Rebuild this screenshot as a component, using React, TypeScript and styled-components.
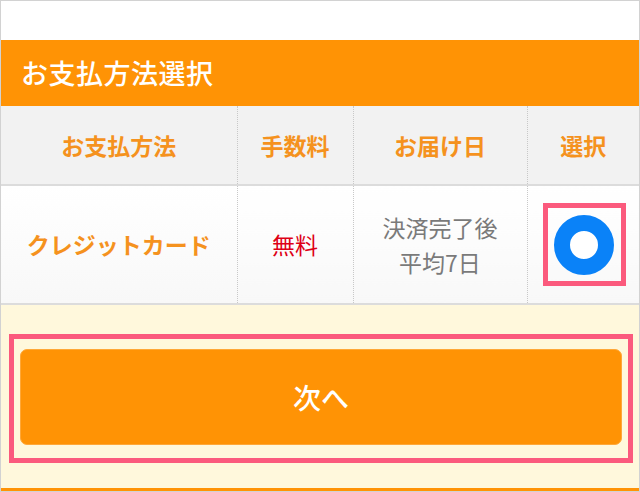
import styled, { createGlobalStyle } from "styled-components";

const GlobalStyle = createGlobalStyle`
	html, body {
		margin: 0;
		padding: 0;
		background: #ffffff;
	}
	body {
		font-family: "Noto Sans CJK JP", "Noto Sans", sans-serif;
	}
	* {
		box-sizing: border-box;
	}
`;

const Frame = styled.div`
	width: 640px;
	height: 492px;
	border: 1px solid #d2d2d2;
	background: #ffffff;
	display: flex;
	flex-direction: column;
	overflow: hidden;
`;

const TopSpace = styled.div`
	height: 39px;
	flex-shrink: 0;
`;

const Heading = styled.h2`
	margin: 0;
	height: 66px;
	flex-shrink: 0;
	background: #ff9305;
	color: #ffffff;
	font-size: 27px;
	font-weight: 500;
	letter-spacing: 0.5px;
	line-height: 66px;
	padding-left: 20px;
`;

const Table = styled.table`
	width: 100%;
	border-collapse: collapse;
	table-layout: fixed;
	flex-shrink: 0;
`;

const HeadCell = styled.th<{ $w: number }>`
	width: ${(p) => p.$w}px;
	height: 79px;
	padding: 0;
	background: #f2f2f2;
	border-bottom: 2px solid #dcdcdc;
	border-left: 1px dotted #c8c8c8;
	color: #f5921e;
	font-size: 23px;
	font-weight: 700;
	text-align: center;
	vertical-align: middle;

	&:first-child {
		border-left: none;
	}
`;

const BodyCell = styled.td<{ $tone?: "orange" | "red" | "gray" }>`
	height: 119px;
	padding: 0;
	background: linear-gradient(#ffffff, #f8f8f8);
	border-bottom: 2px solid #dcdcdc;
	border-left: 1px dotted #c8c8c8;
	font-size: 23px;
	line-height: 35px;
	text-align: center;
	vertical-align: middle;
	font-weight: ${(p) => (p.$tone === "orange" ? 700 : 400)};
	color: ${(p) =>
		p.$tone === "orange" ? "#f5921e" : p.$tone === "red" ? "#de0016" : "#7a7a7a"};

	&:first-child {
		border-left: none;
	}
`;

const Highlight = styled.div`
	display: inline-flex;
	align-items: center;
	justify-content: center;
	width: 83px;
	height: 83px;
	border: 5px solid #fb5a7d;
	vertical-align: middle;
	margin-left: 2px;
`;

const Radio = styled.span`
	display: block;
	width: 60px;
	height: 60px;
	border-radius: 50%;
	border: 16px solid #0a82f8;
	background: #ffffff;
`;

const Footer = styled.div`
	flex: 1;
	background: #fff8dc;
	border-bottom: 3px solid #ff9305;
	padding: 29px 6px 0 8px;
`;

const FocusBox = styled.div`
	border: 5px solid #fb5a7d;
	padding: 10px 6px 13px 6px;
`;

const NextButton = styled.button`
	display: block;
	width: 100%;
	height: 96px;
	border: 1px solid #ffa838;
	border-radius: 7px;
	background: #ff9305;
	color: #ffffff;
	font-family: inherit;
	font-size: 28px;
	font-weight: 500;
	cursor: pointer;
`;

const columns = [
	{ title: "お支払方法", width: 236 },
	{ title: "手数料", width: 116 },
	{ title: "お届け日", width: 174 },
	{ title: "選択", width: 112 },
];

export default function App() {
	return (
		<>
			<GlobalStyle />
			<Frame>
				<TopSpace />
				<Heading>お支払方法選択</Heading>
				<Table>
					<thead>
						<tr>
							{columns.map((c) => (
								<HeadCell key={c.title} $w={c.width}>
									{c.title}
								</HeadCell>
							))}
						</tr>
					</thead>
					<tbody>
						<tr>
							<BodyCell $tone="orange">クレジットカード</BodyCell>
							<BodyCell $tone="red">無料</BodyCell>
							<BodyCell $tone="gray">
								決済完了後
								<br />
								平均7日
							</BodyCell>
							<BodyCell>
								<Highlight>
									<Radio />
								</Highlight>
							</BodyCell>
						</tr>
					</tbody>
				</Table>
				<Footer>
					<FocusBox>
						<NextButton>次へ</NextButton>
					</FocusBox>
				</Footer>
			</Frame>
		</>
	);
}
